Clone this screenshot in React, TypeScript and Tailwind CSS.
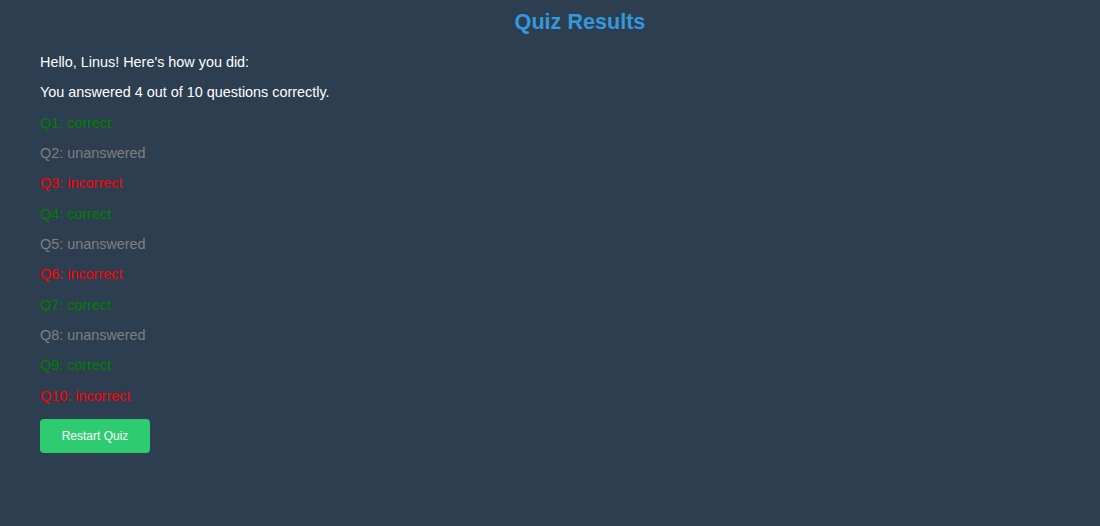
export default function App() {
  const results: { label: string; status: "correct" | "unanswered" | "incorrect" }[] = [
    { label: "Q1", status: "correct" },
    { label: "Q2", status: "unanswered" },
    { label: "Q3", status: "incorrect" },
    { label: "Q4", status: "correct" },
    { label: "Q5", status: "unanswered" },
    { label: "Q6", status: "incorrect" },
    { label: "Q7", status: "correct" },
    { label: "Q8", status: "unanswered" },
    { label: "Q9", status: "correct" },
    { label: "Q10", status: "incorrect" },
  ];
  const color = (s: string) =>
    s === "correct" ? "text-[#008000]" : s === "incorrect" ? "text-[#ff0000]" : "text-[#808080]";
  return (
    <div
      className="w-[1100px] h-[526px] bg-[#2c3e50] text-white px-[40px] pt-[8px]"
      style={{ fontFamily: '"Liberation Sans", Arial, sans-serif' }}
    >
      <h1 className="pl-[60px] text-center text-[21.6px] leading-[28px] font-bold text-[#3498db]">Quiz Results</h1>
      <div className="mt-[18px] flex flex-col gap-[14.33px] text-[14.4px] leading-[16px]">
        <p>Hello, Linus! Here's how you did:</p>
        <p>You answered 4 out of 10 questions correctly.</p>
        {results.map((r) => (
          <p key={r.label} className={color(r.status)}>
            {r.label}: {r.status}
          </p>
        ))}
      </div>
      <button className="mt-[15px] w-[110px] h-[34px] rounded-[4px] bg-[#2ecc71] text-white text-[12px] leading-[14px]">
        Restart Quiz
      </button>
    </div>
  );
}
